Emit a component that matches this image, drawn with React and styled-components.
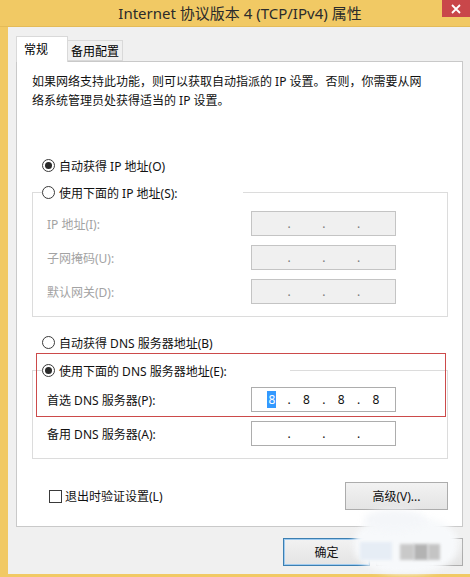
import React from 'react';
import styled, { createGlobalStyle } from 'styled-components';

const GlobalStyle = createGlobalStyle`
	html, body {
		margin: 0;
		padding: 0;
		background: #f0f0f0;
	}
	body {
		font-family: "Noto Sans", "Noto Sans CJK SC", sans-serif;
		font-size: 12px;
		color: #1a1a1a;
	}
`;

const YELLOW = '#f1c964';

const Window = styled.div`
	position: relative;
	width: 470px;
	height: 577px;
	overflow: hidden;
	display: flex;
	flex-direction: column;
	background: #f0f0f0;
`;

const TitleBar = styled.div`
	height: 27px;
	flex: none;
	display: flex;
	align-items: flex-start;
	background: ${YELLOW};
	border-bottom: 1px solid #e4bb58;
	box-sizing: border-box;
`;

const Title = styled.div`
	flex: 1;
	padding-left: 38px;
	text-align: center;
	font-size: 15px;
	line-height: 26px;
	color: #2b2b2b;
	white-space: nowrap;
`;

const CloseButton = styled.div`
	width: 28px;
	height: 17px;
	background: #c9474a;
	display: flex;
	align-items: center;
	justify-content: center;
`;

const Body = styled.div`
	flex: 1;
	display: flex;
	flex-direction: column;
	border-left: 8px solid ${YELLOW};
	border-bottom: 3px solid ${YELLOW};
	padding: 9px 7px 0 8px;
	box-sizing: border-box;
`;

const TabStrip = styled.div`
	height: 25px;
	display: flex;
	align-items: flex-end;
	position: relative;
	z-index: 1;
`;

const Tab = styled.div`
	box-sizing: border-box;
	height: ${p => (p.$active ? '26px' : '21px')};
	width: ${p => (p.$active ? '52px' : 'auto')};
	margin-bottom: ${p => (p.$active ? '-1px' : '0')};
	padding: ${p => (p.$active ? '4px 0 0 7px' : '2px 3px 0 3px')};
	background: ${p => (p.$active ? '#ffffff' : '#f0f0f0')};
	border: 1px solid #d9d9d9;
	border-bottom: ${p => (p.$active ? 'none' : '1px solid #d9d9d9')};
	border-left: ${p => (p.$active ? '1px solid #d9d9d9' : 'none')};
	line-height: 17px;
	color: #000;
`;

const Panel = styled.div`
	position: relative;
	height: 466px;
	box-sizing: border-box;
	background: #ffffff;
	border: 1px solid #c9c9c9;
	padding: 0 14px 0 15px;
	display: flex;
	flex-direction: column;
`;

const Intro = styled.p`
	margin: 10px 0 0 0;
	line-height: 19px;
	color: #111;
`;

const RadioRow = styled.label`
	display: flex;
	align-items: center;
	gap: 4px;
	height: 19px;
	margin: ${p => p.$margin || '0'};
	padding-left: ${p => p.$indent || '0'};
	color: #111;
	white-space: nowrap;
`;

const RadioDot = styled.span`
	box-sizing: border-box;
	width: 13px;
	height: 13px;
	border-radius: 50%;
	border: 1px solid #3a3a3a;
	background: #fff;
	display: flex;
	align-items: center;
	justify-content: center;

	&::after {
		content: '';
		width: 7px;
		height: 7px;
		border-radius: 50%;
		background: ${p => (p.$checked ? '#2a2a2a' : 'transparent')};
	}
`;

const GroupBox = styled.fieldset`
	margin: ${p => p.$margin || '0'};
	padding: 0;
	border: 1px solid #dcdcdc;
	min-width: 0;
`;

const Legend = styled.legend`
	margin-left: 9px;
	padding: 0;
	width: ${p => p.$width}px;
	height: 19px;
`;

const FieldGrid = styled.div`
	display: grid;
	grid-template-columns: 204px 145px;
	row-gap: 9px;
	padding: ${p => p.$top || 9}px 0 12px 14px;
	align-items: center;
`;

const FieldLabel = styled.span`
	color: ${p => (p.$disabled ? '#a3a3a3' : '#111')};
	white-space: nowrap;
`;

const IpField = styled.div`
	box-sizing: border-box;
	height: 25px;
	border: 1px solid ${p => (p.$disabled ? '#c4c4c4' : '#adadad')};
	background: ${p => (p.$disabled ? '#f0f0f0' : '#ffffff')};
	display: flex;
	align-items: center;
	padding-left: 7px;
	color: ${p => (p.$disabled ? '#7a7a7a' : '#111')};
`;

const Octet = styled.span`
	width: 25.7px;
	text-align: center;
	line-height: 15px;
`;

const Sep = styled.span`
	width: 9px;
	text-align: center;
	line-height: 15px;
`;

const Selected = styled.span`
	background: #3399ff;
	color: #fff;
	padding: 0 1px;
`;

const Footer = styled.div`
	margin-top: 23px;
	height: 28px;
	display: flex;
	align-items: center;
	justify-content: space-between;
`;

const CheckRow = styled.label`
	display: flex;
	align-items: center;
	gap: 3px;
	margin-left: 17px;
	color: #111;
`;

const CheckBox = styled.span`
	box-sizing: border-box;
	width: 13px;
	height: 13px;
	border: 1px solid #3a3a3a;
	background: #fff;
`;

const Button = styled.div`
	box-sizing: border-box;
	width: ${p => p.$width}px;
	height: 28px;
	display: flex;
	align-items: center;
	justify-content: center;
	background: linear-gradient(#f2f2f2, #e4e4e4);
	border: 1px solid ${p => (p.$default ? '#3c7fb1' : '#acacac')};
	box-shadow: ${p => (p.$default ? 'inset 0 0 0 1px #9fcbf0' : 'none')};
	color: #111;
`;

const ButtonRow = styled.div`
	margin-top: 11px;
	display: flex;
	justify-content: flex-end;
	gap: 6px;
`;

const RedMark = styled.div`
	position: absolute;
	left: 19px;
	top: 291px;
	width: 410px;
	height: 64px;
	border: 1px solid #cc4a4a;
	box-sizing: border-box;
	pointer-events: none;
`;

const Watermark = styled.div`
	position: absolute;
	left: 350px;
	top: 512px;
	width: 112px;
	height: 65px;
	pointer-events: none;
`;

const Blob = styled.div`
	position: absolute;
	left: ${p => p.$x}px;
	top: ${p => p.$y}px;
	width: ${p => p.$w}px;
	height: ${p => p.$h}px;
	border-radius: 45%;
	background: ${p => p.$c || '#f7f9fb'};
	filter: blur(3px);
`;

const Mosaic = styled.div`
	position: absolute;
	left: ${p => p.$x}px;
	top: ${p => p.$y}px;
	width: ${p => p.$w}px;
	height: ${p => p.$h}px;
	background: ${p => p.$c};
	filter: blur(1.5px);
`;

const Radio = ({ checked, children, ...rest }) => (
	<RadioRow {...rest}>
		<RadioDot $checked={checked} />
		{children}
	</RadioRow>
);

const Ip = ({ value, disabled, selectFirst }) => {
	const parts = value || ['', '', '', ''];
	const out = [];
	parts.forEach((p, i) => {
		out.push(
			<Octet key={'o' + i}>
				{i === 0 && selectFirst && p ? <Selected>{p}</Selected> : p}
			</Octet>
		);
		if (i < 3) out.push(<Sep key={'s' + i}>.</Sep>);
	});
	return <IpField $disabled={disabled}>{out}</IpField>;
};

export default function App() {
	return (
		<>
			<GlobalStyle />
			<Window>
				<TitleBar>
					<Title>Internet 协议版本 4 (TCP/IPv4) 属性</Title>
					<CloseButton>
						<svg width="10" height="10" viewBox="0 0 10 10">
							<path d="M1 1 L9 9 M9 1 L1 9" stroke="#fff" strokeWidth="1.8" />
						</svg>
					</CloseButton>
				</TitleBar>
				<Body>
					<TabStrip>
						<Tab $active>常规</Tab>
						<Tab>备用配置</Tab>
					</TabStrip>
					<Panel>
						<Intro>
							如果网络支持此功能，则可以获取自动指派的 IP 设置。否则，你需要从网
							<br />
							络系统管理员处获得适当的 IP 设置。
						</Intro>

						<Radio checked $margin="46px 0 0 0" $indent="10px">
							自动获得 IP 地址(O)
						</Radio>

						<GroupBox $margin="8px 0 0 0">
							<Legend $width={201}>
								<Radio>使用下面的 IP 地址(S):</Radio>
							</Legend>
							<FieldGrid>
								<FieldLabel $disabled>IP 地址(I):</FieldLabel>
								<Ip disabled />
								<FieldLabel $disabled>子网掩码(U):</FieldLabel>
								<Ip disabled />
								<FieldLabel $disabled>默认网关(D):</FieldLabel>
								<Ip disabled />
							</FieldGrid>
						</GroupBox>

						<Radio $margin="16px 0 0 0" $indent="10px">
							自动获得 DNS 服务器地址(B)
						</Radio>

						<GroupBox $margin="9px 0 0 0">
							<Legend $width={248}>
								<Radio checked>使用下面的 DNS 服务器地址(E):</Radio>
							</Legend>
							<FieldGrid $top={7}>
								<FieldLabel>首选 DNS 服务器(P):</FieldLabel>
								<Ip value={['8', '8', '8', '8']} selectFirst />
								<FieldLabel>备用 DNS 服务器(A):</FieldLabel>
								<Ip />
							</FieldGrid>
						</GroupBox>

						<Footer>
							<CheckRow>
								<CheckBox />
								退出时验证设置(L)
							</CheckRow>
							<Button $width={103}>高级(V)...</Button>
						</Footer>

						<RedMark />
					</Panel>
					<ButtonRow>
						<Button $width={87} $default>确定</Button>
						<Button $width={87}>取消</Button>
					</ButtonRow>
				</Body>
				<Watermark>
					<Blob $x={4} $y={4} $w={104} $h={58} />
					<Blob $x={14} $y={-2} $w={60} $h={20} $c="#f4f6f9" />
					<Mosaic $x={10} $y={30} $w={32} $h={18} $c="#e6edf5" />
					<Mosaic $x={50} $y={32} $w={14} $h={16} $c="#c9c9c9" />
					<Mosaic $x={64} $y={32} $w={14} $h={16} $c="#b3b3b3" />
					<Mosaic $x={78} $y={32} $w={12} $h={16} $c="#c4c4c4" />
				</Watermark>
			</Window>
		</>
	);
}
